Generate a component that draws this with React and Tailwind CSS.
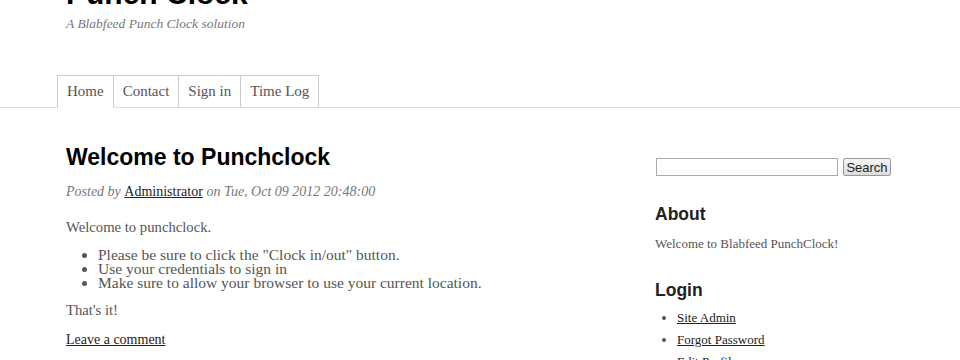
const tabs = ['Home', 'Contact', 'Sign in', 'Time Log'];

const steps = [
	'Please be sure to click the "Clock in/out" button.',
	'Use your credentials to sign in',
	'Make sure to allow your browser to use your current location.',
];

const loginLinks = ['Site Admin', 'Forgot Password', 'Edit Profile'];

export default function App() {
	return (
		<div className="h-[360px] overflow-hidden bg-white font-['Liberation_Serif',serif] text-[#555]">
			<header className="pl-[66px]">
				<h1 className="-mt-[21px] text-[30px] leading-[30px] font-bold text-black font-['Liberation_Sans',Arial,sans-serif]">
					Punch Clock
				</h1>
				<p className="mt-[7px] text-[13.5px] leading-[16px] italic text-[#777]">A Blabfeed Punch Clock solution</p>
			</header>

			<nav className="mt-[43px] border-b border-[#ddd] pl-[57px] flex">
				{tabs.map((tab, i) => (
					<a
						key={tab}
						className={
							'h-[33px] -mb-px px-[9px] flex items-center text-[15px] text-[#555] border border-[#ccc] ' +
							(i > 0 ? 'border-l-0 ' : '') +
							(i === 0 ? 'border-b-white bg-white' : 'border-b-[#ddd]')
						}
					>
						{tab}
					</a>
				))}
			</nav>

			<div className="flex pl-[66px] pt-[36px]">
				<main className="w-[589px] text-[14.7px] leading-[14px]">
					<h2 className="text-[23px] leading-[26px] font-bold text-black font-['Liberation_Sans',Arial,sans-serif]">
						Welcome to Punchclock
					</h2>
					<p className="mt-[14px] text-[14px] leading-[16px] italic text-[#777]">
						Posted by <a className="not-italic text-[#222] underline">Administrator</a> on Tue, Oct 09 2012 20:48:00
					</p>
					<p className="mt-[20px]">Welcome to punchclock.</p>
					<ul className="mt-[14px] list-disc pl-[32px] text-[15.5px]">
						{steps.map((s) => (
							<li key={s}>{s}</li>
						))}
					</ul>
					<p className="mt-[13px]">That's it!</p>
					<p className="mt-[15px]">
						<a className="text-[#222] underline text-[14px]">Leave a comment</a>
					</p>
				</main>

				<aside className="w-[240px] pt-[14px]">
					<div className="flex items-center gap-[5px] pl-[1px]">
						<input className="w-[182px] h-[18px] border border-[#aaa] bg-white" />
						<button className="h-[18px] w-[48px] rounded-[2px] border border-[#999] bg-gradient-to-b from-[#f6f6f6] to-[#dcdcdc] text-[13px] leading-none text-[#222] font-['Liberation_Sans',Arial,sans-serif]">
							Search
						</button>
					</div>
					<h3 className="mt-[27px] text-[17.5px] leading-[22px] font-bold text-[#222] font-['Liberation_Sans',Arial,sans-serif]">
						About
					</h3>
					<p className="mt-[11px] text-[13px] leading-[16px]">Welcome to Blabfeed PunchClock!</p>
					<h3 className="mt-[27px] text-[17.5px] leading-[22px] font-bold text-[#222] font-['Liberation_Sans',Arial,sans-serif]">
						Login
					</h3>
					<ul className="mt-[9px] list-disc pl-[22px] text-[13px] leading-[16px] text-[#555]">
						{loginLinks.map((l) => (
							<li key={l} className="mb-[6px]">
								<a className="text-[#222] underline">{l}</a>
							</li>
						))}
					</ul>
				</aside>
			</div>
		</div>
	);
}
